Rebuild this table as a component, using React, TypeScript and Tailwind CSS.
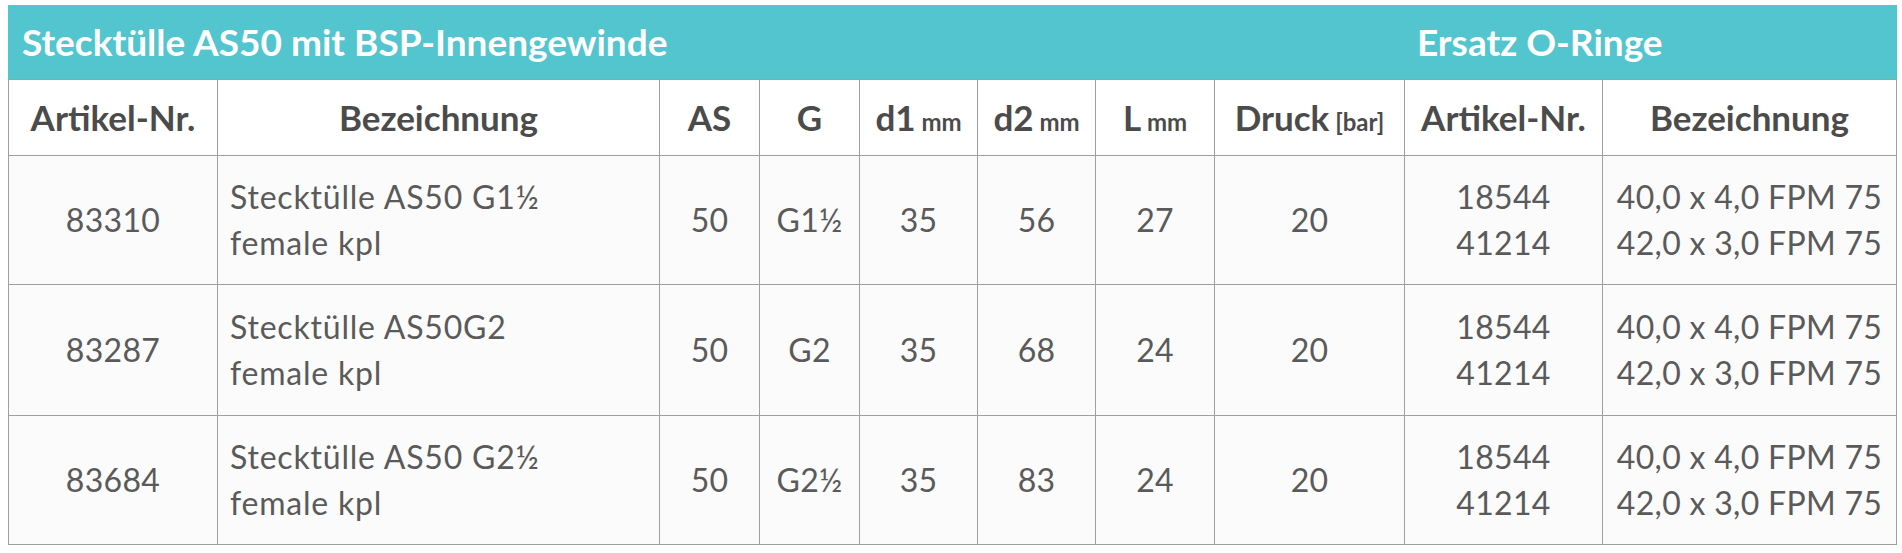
const rows = [
  { nr: '83310', name: ['Stecktülle AS50 G1½', 'female kpl'], as: '50', g: 'G1½', d1: '35', d2: '56', l: '27', druck: '20' },
  { nr: '83287', name: ['Stecktülle AS50G2', 'female kpl'], as: '50', g: 'G2', d1: '35', d2: '68', l: '24', druck: '20' },
  { nr: '83684', name: ['Stecktülle AS50 G2½', 'female kpl'], as: '50', g: 'G2½', d1: '35', d2: '83', l: '24', druck: '20' },
];

const oRings = [
  { nr: '18544', name: '40,0 x 4,0 FPM 75' },
  { nr: '41214', name: '42,0 x 3,0 FPM 75' },
];

const th = 'border border-[#9f9f9f] text-center align-middle font-bold text-[35px] leading-none';
const td = 'border border-[#9f9f9f] text-center align-middle';

const Unit = ({ children }: { children: string }) => (
  <span className="text-[24px]"> {children}</span>
);

export default function App() {
  return (
    <div className="min-h-screen bg-white pt-[5px] pl-[8px] font-['Lato',sans-serif]">
      <div className="flex h-[74px] w-[1889px] items-center bg-[#53c5cf] text-[37px] font-bold text-white">
        <span className="w-[1396px] pl-[14px]">Stecktülle AS50 mit BSP-Innengewinde</span>
        <span className="pl-[13px]">Ersatz O-Ringe</span>
      </div>
      <table className="w-[1889px] table-fixed border-collapse text-[#4b4b4b]">
        <colgroup>
          <col className="w-[209px]" />
          <col className="w-[442px]" />
          <col className="w-[100px]" />
          <col className="w-[100px]" />
          <col className="w-[118px]" />
          <col className="w-[118px]" />
          <col className="w-[119px]" />
          <col className="w-[190px]" />
          <col className="w-[198px]" />
          <col className="w-[294px]" />
        </colgroup>
        <thead>
          <tr className="h-[76px] bg-white">
            <th className={th}>Artikel-Nr.</th>
            <th className={th}>Bezeichnung</th>
            <th className={th}>AS</th>
            <th className={th}>G</th>
            <th className={th}>d1<Unit>mm</Unit></th>
            <th className={th}>d2<Unit>mm</Unit></th>
            <th className={th}>L<Unit>mm</Unit></th>
            <th className={th}>Druck<Unit>[bar]</Unit></th>
            <th className={th}>Artikel-Nr.</th>
            <th className={th}>Bezeichnung</th>
          </tr>
        </thead>
        <tbody className="text-[32px] leading-[46px] tracking-[0.3px] text-[#5a5a5a]">
          {rows.map((r, i) => (
            <tr key={r.nr} className={i === 1 ? 'h-[131px] bg-[#fbfbfb]' : 'h-[129px] bg-[#fbfbfb]'}>
              <td className={td}>{r.nr}</td>
              <td className="border border-[#9f9f9f] px-[12px] text-left align-middle tracking-[0.8px]">
                {r.name.map((line) => (
                  <div key={line}>{line}</div>
                ))}
              </td>
              <td className={td}>{r.as}</td>
              <td className={td}>{r.g}</td>
              <td className={td}>{r.d1}</td>
              <td className={td}>{r.d2}</td>
              <td className={td}>{r.l}</td>
              <td className={td}>{r.druck}</td>
              <td className={td}>
                {oRings.map((o) => (
                  <div key={o.nr}>{o.nr}</div>
                ))}
              </td>
              <td className={td}>
                {oRings.map((o) => (
                  <div key={o.nr}>{o.name}</div>
                ))}
              </td>
            </tr>
          ))}
        </tbody>
      </table>
    </div>
  );
}
